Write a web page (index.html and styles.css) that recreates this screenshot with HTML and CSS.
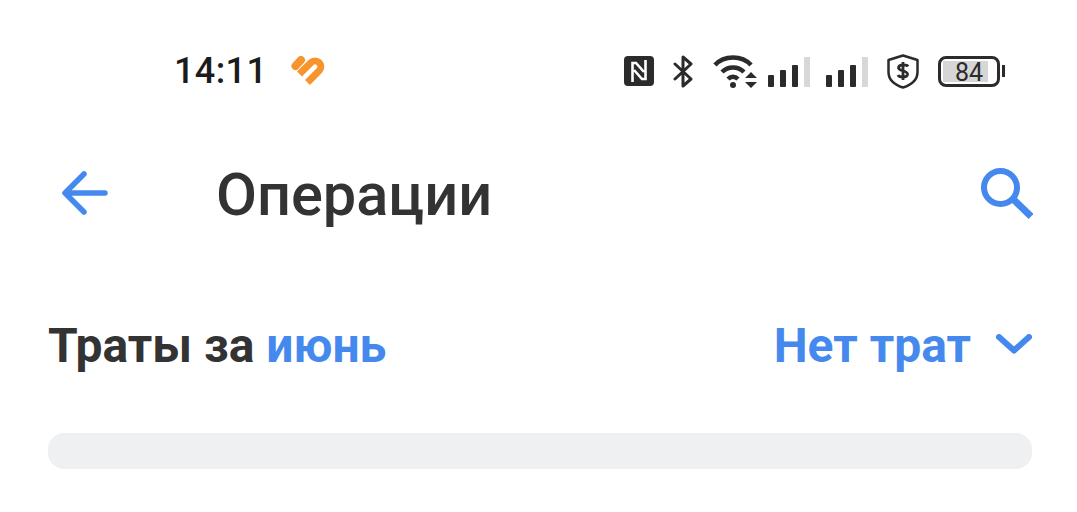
FILE: index.html
```html
<!DOCTYPE html>
<html lang="ru">
<head>
<meta charset="utf-8">
<title>Операции</title>
<link rel="stylesheet" href="styles.css">
</head>
<body>
<div class="status">
  <div class="status-left">
    <span class="time">14:11</span>
    <svg class="heart" width="34" height="30" viewBox="0 0 34 30"><path d="M4.500 10L10 4" fill="none" stroke="#f7942d" stroke-width="8" stroke-linecap="round"/><path d="M8.500 18L20 6.500A5.800 5.800 0 0 1 28.200 14.700L16.500 26.500" fill="none" stroke="#f7942d" stroke-width="7"/></svg>
  </div>
  <div class="status-right">
    <svg class="nfc" width="30" height="30" viewBox="0 0 30 30"><rect width="30" height="30" rx="4" fill="#2b2b2b"/><path d="M8.500 26V7H12L20 16M21.500 4V23H18L10 14" fill="none" stroke="#fff" stroke-width="2.600"/></svg>
    <svg class="bt" width="21" height="33" viewBox="0 0 21 33"><path d="M2 9L18 24L10 31V2L18 9L2 24" fill="none" stroke="#2b2b2b" stroke-width="3" stroke-linejoin="round" stroke-linecap="round"/></svg>
    <svg class="wifi" width="44" height="34" viewBox="0 0 44 34"><g fill="none" stroke="#2b2b2b" stroke-width="4.500"><path d="M2 11C11 1 29 1 38 11"/><path d="M9 18C15 12 25 12 31 18"/><path d="M15 25C18 22 22 22 25 25"/></g><circle cx="20" cy="31" r="3" fill="#2b2b2b"/><path d="M32 24H44L38 18ZM32 28H44L38 34Z" fill="#2b2b2b"/></svg>
    <svg class="signal" width="43" height="30" viewBox="0 0 43 30"><rect y="18" width="6" height="12" rx="1" fill="#2b2b2b"/><rect x="12" y="13" width="6" height="17" rx="1" fill="#2b2b2b"/><rect x="24" y="8" width="6" height="22" rx="1" fill="#2b2b2b"/><rect x="36" width="6" height="30" fill="#d8d8d8"/></svg>
    <svg class="signal two" width="43" height="30" viewBox="0 0 43 30"><rect y="18" width="6" height="12" rx="1" fill="#2b2b2b"/><rect x="12" y="13" width="6" height="17" rx="1" fill="#2b2b2b"/><rect x="24" y="8" width="6" height="22" rx="1" fill="#2b2b2b"/><rect x="36" width="6" height="30" fill="#d8d8d8"/></svg>
    <svg class="shield" width="32" height="35" viewBox="0 0 32 35"><path d="M16 1.500L30.500 6V18C30.500 26 24 31 16 33.500C8 31 1.500 26 1.500 18V6Z" fill="none" stroke="#2b2b2b" stroke-width="2.500" stroke-linejoin="round"/><path d="M21 12.500C20 10.500 12 10 11.500 13.500C11 17.500 21 16 20.500 20.500C20 24 12 23.500 11 21M16 8V26" fill="none" stroke="#2b2b2b" stroke-width="2.800"/></svg>
    <div class="battery">
      <div class="battery-body"><span class="battery-level">84</span></div>
      <span class="battery-nub"></span>
    </div>
  </div>
</div>

<header class="header">
  <svg class="back" width="46" height="44" viewBox="0 0 46 44"><path d="M43 22H3.500M22 3L3 22L22 41" fill="none" stroke="#4689ee" stroke-width="5.500" stroke-linecap="round" stroke-linejoin="round"/></svg>
  <h1 class="title">Операции</h1>
  <svg class="search" width="52" height="51" viewBox="0 0 52 51"><circle cx="19.500" cy="19.500" r="16.500" fill="none" stroke="#4689ee" stroke-width="6"/><path d="M32 31L50 48.500" stroke="#4689ee" stroke-width="7"/></svg>
</header>

<section class="summary">
  <div class="summary-label">Траты за <span class="accent">июнь</span></div>
  <div class="summary-filter">
    <span class="accent">Нет трат</span>
    <svg class="chevron" width="36" height="20" viewBox="0 0 36 20"><path d="M3 3L18 16.500L33 3" fill="none" stroke="#4689ee" stroke-width="6" stroke-linecap="round" stroke-linejoin="round"/></svg>
  </div>
</section>

<div class="track"></div>
</body>
</html>
```
FILE: styles.css
```css
* { box-sizing: border-box; }
html, body { margin: 0; padding: 0; }
body {
  width: 1077px;
  height: 512px;
  background: #fff;
  font-family: Roboto, "Liberation Sans", sans-serif;
  overflow: hidden;
}
.status {
  display: flex;
  justify-content: space-between;
  align-items: center;
  height: 36px;
  margin-top: 53px;
  padding: 0 72px 0 174px;
}
.status-left, .status-right { display: flex; align-items: center; }
.time {
  font-size: 36px;
  line-height: 36px;
  font-weight: 500;
  color: #1c1c1c;
  letter-spacing: 0.4px;
}
.heart { margin-left: 24px; }
.bt { margin-left: 19px; }
.wifi { margin-left: 19px; }
.signal { margin-left: 11px; margin-top: 1px; }
.signal.two { margin-left: 15px; }
.shield { margin-left: 18px; }
.battery { display: flex; align-items: center; margin-left: 19px; }
.battery-body {
  width: 62px;
  height: 31px;
  border: 3px solid #2b2b2b;
  border-radius: 8px;
  padding: 2px 9px 2px 2px;
}
.battery-level {
  display: block;
  height: 100%;
  padding-left: 7px;
  background: #d6d6d6;
  font-size: 25px;
  line-height: 23px;
  color: #2b2b2b;
  text-align: center;
}
.battery-nub {
  width: 3px;
  height: 12px;
  margin-left: 2px;
  background: #2b2b2b;
}
.header {
  display: flex;
  align-items: center;
  margin-top: 80px;
  height: 48px;
  padding: 0 44px 0 62px;
}
.title {
  flex: 1;
  margin: 4px 0 0 108px;
  font-size: 59.500px;
  line-height: 48px;
  font-weight: 500;
  color: #333;
}
.search { margin-top: 1px; }
.summary {
  display: flex;
  justify-content: space-between;
  align-items: center;
  margin-top: 101px;
  height: 56px;
  padding: 0 45px 0 48px;
  font-size: 48px;
  line-height: 56px;
  font-weight: 700;
  color: #333;
}
.accent { color: #4689ee; }
.summary-filter { display: flex; align-items: center; }
.chevron { margin-left: 25px; margin-top: -5px; }
.track {
  height: 36px;
  margin: 59px 45px 0 48px;
  background: #eff0f2;
  border-radius: 16px;
}
```
